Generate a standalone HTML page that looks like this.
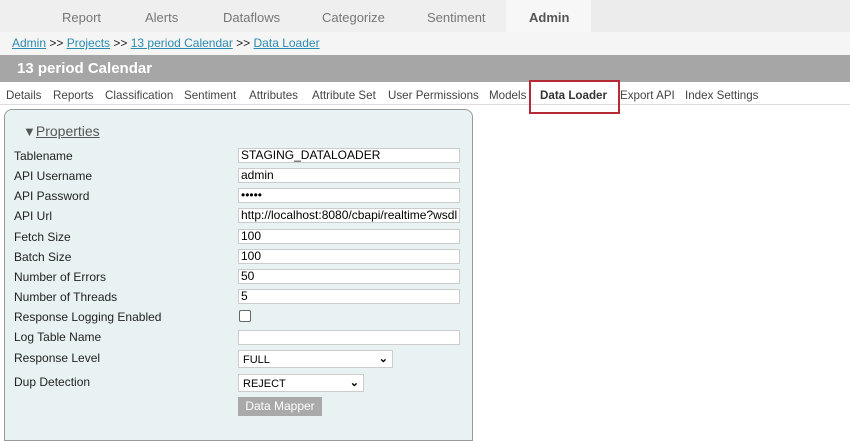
<html><head><style>
body{margin:0;width:850px;height:425px;overflow:hidden;background:#fff;font-family:"Liberation Sans",sans-serif;position:relative}
.a{position:absolute}
.nav{left:0;top:0;width:850px;height:32px;background:#efefef}
.nav span{position:absolute;top:10px;font-size:13px;color:#777}
.bc{left:0;top:32px;width:850px;height:23px;background:#f5f5f5;font-size:12px;color:#222}
.bc a{color:#2a8ab0;text-decoration:underline}
.hd{left:0;top:55px;width:850px;height:27px;background:#a6a6a6;color:#fff;font-weight:bold;font-size:15px}
.st{left:0;top:83px;width:850px;height:21px;border-bottom:1px solid #ddd;font-size:11.6px;color:#444}
.st span{position:absolute;top:6px}
.pn{left:4px;top:109px;width:467px;height:330px;background:#e8f2f2;border:1px solid #999;border-radius:8px 8px 0 0}
.l{position:absolute;left:14px;font-size:12px;color:#222}
.i{position:absolute;left:238px;width:222px;height:15px;background:#fff;border:1px solid #ccc;box-sizing:border-box;font-size:12px;color:#000;padding-left:2px;line-height:13px;white-space:nowrap;overflow:hidden}
.s{position:absolute;left:238px;height:18px;background:#fff;border:1px solid #ccc;box-sizing:border-box;font-size:11px;padding:3px 4px}
.s b{position:absolute;right:4px;top:1px;font-size:11px}
</style></head><body>
<div class="a nav">
<span style="left:62px">Report</span><span style="left:145px">Alerts</span><span style="left:223px">Dataflows</span><span style="left:322px">Categorize</span><span style="left:427px">Sentiment</span>
<div class="a" style="left:506px;top:0;width:85px;height:32px;background:#f7f7f7"></div>
<span style="left:529px;font-weight:bold;color:#555">Admin</span>
<div class="a" style="left:591px;top:0;width:259px;height:32px;background:#ececec"></div>
</div>
<div class="a bc"><div class="a" style="left:12px;top:4px;white-space:nowrap"><a>Admin</a> &gt;&gt; <a>Projects</a> &gt;&gt; <a>13 period Calendar</a> &gt;&gt; <a>Data Loader</a></div></div>
<div class="a hd"><div class="a" style="left:17px;top:5px">13 period Calendar</div></div>
<div class="a st">
<span style="left:6px">Details</span><span style="left:53px">Reports</span><span style="left:105px">Classification</span><span style="left:184px">Sentiment</span><span style="left:249px">Attributes</span><span style="left:312px">Attribute Set</span><span style="left:388px">User Permissions</span><span style="left:489px">Models</span>
<span style="left:540px;font-weight:bold;color:#333">Data Loader</span><span style="left:620px">Export API</span><span style="left:685px">Index Settings</span>
</div>
<div class="a" style="left:529px;top:80px;width:87px;height:30px;border:2px solid #b52a35"></div>
<div class="a pn"></div>
<div class="a" style="left:23px;top:123px;font-size:14px;color:#555"><span style="font-size:13px">▼</span><span style="text-decoration:underline">Properties</span></div>
<div class="l" style="top:149px">Tablename</div><div class="i" style="top:148px">STAGING_DATALOADER</div>
<div class="l" style="top:169px">API Username</div><div class="i" style="top:168px">admin</div>
<div class="l" style="top:189px">API Password</div><div class="i" style="top:188px">•••••</div>
<div class="l" style="top:209px">API Url</div><div class="i" style="top:208px">http://localhost:8080/cbapi/realtime?wsdl</div>
<div class="l" style="top:230px">Fetch Size</div><div class="i" style="top:229px">100</div>
<div class="l" style="top:250px">Batch Size</div><div class="i" style="top:249px">100</div>
<div class="l" style="top:270px">Number of Errors</div><div class="i" style="top:269px">50</div>
<div class="l" style="top:290px">Number of Threads</div><div class="i" style="top:289px">5</div>
<div class="l" style="top:310px">Response Logging Enabled</div><div class="a" style="left:239px;top:310px;width:10px;height:10px;border:1px solid #666;border-radius:2px;background:#fff"></div>
<div class="l" style="top:330px">Log Table Name</div><div class="i" style="top:330px"></div>
<div class="l" style="top:351px">Response Level</div><div class="s" style="top:350px;width:155px">FULL<b>⌄</b></div>
<div class="l" style="top:375px">Dup Detection</div><div class="s" style="top:374px;width:126px">REJECT<b>⌄</b></div>
<div class="a" style="left:238px;top:397px;width:84px;height:19px;background:#a9a9a9;color:#fff;font-size:12px;text-align:center;line-height:19px">Data Mapper</div>
</body></html>
